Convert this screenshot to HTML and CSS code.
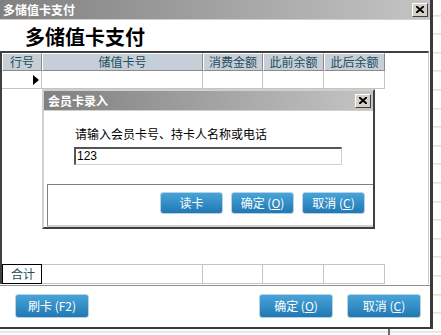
FILE: index.html
```html
<!DOCTYPE html>
<html lang="zh-CN">
  <head>
    <meta charset="UTF-8" />
    <title>多储值卡支付</title>
    <link rel="stylesheet" href="styles.css">
  </head>
  <body>
    <div class="desk">
      <div class="window">
        <div class="titlebar">
          <span>多储值卡支付</span>
          <span class="close">
            <svg width="8" height="7" viewBox="0 0 8 7"><path d="M0 0 L8 7 M8 0 L0 7" stroke="#000" stroke-width="2"/></svg>
          </span>
        </div>
        <div class="heading">多储值卡支付</div>

        <div class="grid">
          <div class="row head">
            <div class="cell c1">行号</div>
            <div class="cell c2">储值卡号</div>
            <div class="cell c3">消费金额</div>
            <div class="cell c4">此前余额</div>
            <div class="cell c5">此后余额</div>
          </div>
          <div class="row line">
            <div class="cell c1"><span class="cursor"></span></div>
            <div class="cell c2"></div>
            <div class="cell c3"></div>
            <div class="cell c4"></div>
            <div class="cell c5"></div>
          </div>
          <div class="fill"></div>
          <div class="row total">
            <div class="cell c1 sum">合计</div>
            <div class="cell c2"></div>
            <div class="cell c3"></div>
            <div class="cell c4"></div>
            <div class="cell c5"></div>
          </div>
        </div>

        <div class="footer">
          <button class="btn big">刷卡 (F2)</button>
          <div class="spacer"></div>
          <button class="btn big">确定 (<u>O</u>)</button>
          <button class="btn big">取消 (<u>C</u>)</button>
        </div>

        <!-- 弹出的会员卡录入框 -->
        <div class="dialog">
          <div class="titlebar small">
            <span>会员卡录入</span>
            <span class="close">
              <svg width="8" height="7" viewBox="0 0 8 7"><path d="M0 0 L8 7 M8 0 L0 7" stroke="#000" stroke-width="2"/></svg>
            </span>
          </div>
          <div class="dialog-body">
            <div class="label">请输入会员卡号、持卡人名称或电话</div>
            <div class="input">123</div>
          </div>
          <div class="panel">
            <button class="btn">读卡</button>
            <button class="btn">确定 (<u>O</u>)</button>
            <button class="btn">取消 (<u>C</u>)</button>
          </div>
        </div>
      </div>
    </div>
  </body>
</html>
```

FILE: styles.css
```css
* {
  margin: 0;
  padding: 0;
  box-sizing: border-box;
}
body {
  font-family: "Noto Sans CJK SC", "Liberation Sans", sans-serif;
  font-size: 12px;
  background: #fff;
}
.desk {
  width: 441px;
  height: 335px;
  background:
    linear-gradient(to right, transparent 388px, #6a6a6a 388px, #6a6a6a 390px, transparent 390px),
    repeating-linear-gradient(to bottom, #fff 0, #fff 17.6px, #cfcfcf 17.6px, #cfcfcf 18.6px);
  background-position: 0 0, 0 -2.6px;
}
.window {
  position: relative;
  width: 433px;
  height: 329px;
  background: #fff;
  border-right: 3px solid #3a3a3a;
  border-bottom: 2px solid #3a3a3a;
  display: flex;
  flex-direction: column;
}
.titlebar {
  height: 20px;
  display: flex;
  align-items: center;
  justify-content: space-between;
  padding-left: 3px;
  padding-right: 2px;
  background: linear-gradient(to right, #808080, #c4c4c4);
  color: #fff;
  font-weight: bold;
  font-size: 12px;
  border-bottom: 1px solid #d4d0c8;
}
.titlebar.small {
  height: 20px;
  padding-left: 4px;
}
.close {
  width: 16px;
  height: 14px;
  background: #d4d0c8;
  border: 1px solid;
  border-color: #fff #404040 #404040 #fff;
  display: flex;
  align-items: center;
  justify-content: center;
}
.heading {
  height: 31px;
  padding-left: 25px;
  padding-top: 4px;
  font-size: 20px;
  font-weight: bold;
  line-height: 26px;
  color: #000;
}
.grid {
  height: 233px;
  margin-right: 1px;
  border-top: 2px solid #404040;
  border-left: 2px solid #404040;
  border-right: 1px solid #c8c8c8;
  display: flex;
  flex-direction: column;
}
.row {
  display: flex;
  flex-shrink: 0;
}
.cell {
  height: 100%;
  flex-shrink: 0;
}
.c1 { width: 40px; }
.c2 { width: 161px; }
.c3 { width: 60px; }
.c4 { width: 61px; }
.c5 { width: 61px; }
.head {
  height: 18px;
}
.head .cell {
  background: #c6ced8;
  border: 1px solid;
  border-color: #fff #8a8a8a #8a8a8a #fff;
  color: #1e4d5b;
  text-align: center;
  line-height: 15px;
}
.line {
  height: 18px;
}
.line .cell,
.total .cell {
  border-right: 1px solid #c4c4c4;
  border-bottom: 1px solid #c4c4c4;
}
.line .c1 {
  display: flex;
  justify-content: flex-end;
  align-items: center;
  padding-right: 2px;
}
.cursor {
  width: 0;
  height: 0;
  border-top: 5px solid transparent;
  border-bottom: 5px solid transparent;
  border-left: 6px solid #000;
}
.fill {
  flex: 1;
}
.total {
  height: 20px;
}
.total .cell {
  border-top: 1px solid #c4c4c4;
}
.total .sum {
  border: 1px solid #000;
  color: #1e4d5b;
  padding-left: 8px;
  line-height: 17px;
}
.footer {
  flex: 1;
  margin-top: 1px;
  border-top: 1px solid #909090;
  padding: 8px 9px 0 15px;
  display: flex;
  align-items: flex-start;
  gap: 14px;
}
.spacer {
  flex: 1;
}
.btn {
  width: 63px;
  height: 22px;
  border: 1px solid #b6d2e6;
  border-radius: 3px;
  background: linear-gradient(#48a4d8, #2178b2);
  color: #fff;
  font-family: "Noto Sans CJK SC", "Liberation Sans", sans-serif;
  font-size: 12px;
  line-height: 18px;
}
.btn.big {
  width: 74px;
  height: 24px;
}
.dialog {
  position: absolute;
  left: 42px;
  top: 89px;
  width: 333px;
  height: 140px;
  background: #fff;
  border: 2px solid;
  border-color: #d4d0c8 #404040 #404040 #d4d0c8;
  display: flex;
  flex-direction: column;
}
.dialog-body {
  height: 73px;
  padding: 15px 0 0 30px;
}
.label {
  line-height: 16px;
  padding-left: 1px;
  color: #000;
}
.input {
  width: 268px;
  height: 18px;
  margin-top: 5px;
  border-top: 2px solid #555;
  border-left: 2px solid #555;
  border-right: 1px solid #d4d0c8;
  border-bottom: 1px solid #d4d0c8;
  padding-left: 1px;
  font-family: "Liberation Sans", sans-serif;
  font-size: 12px;
  line-height: 15px;
}
.panel {
  flex: 1;
  margin-left: 3px;
  border-top: 1px solid #808080;
  border-left: 1px solid #808080;
  border-bottom: 2px solid #d4d0c8;
  padding: 7px 8px 0 0;
  display: flex;
  justify-content: flex-end;
  align-items: flex-start;
  gap: 8px;
}
```
